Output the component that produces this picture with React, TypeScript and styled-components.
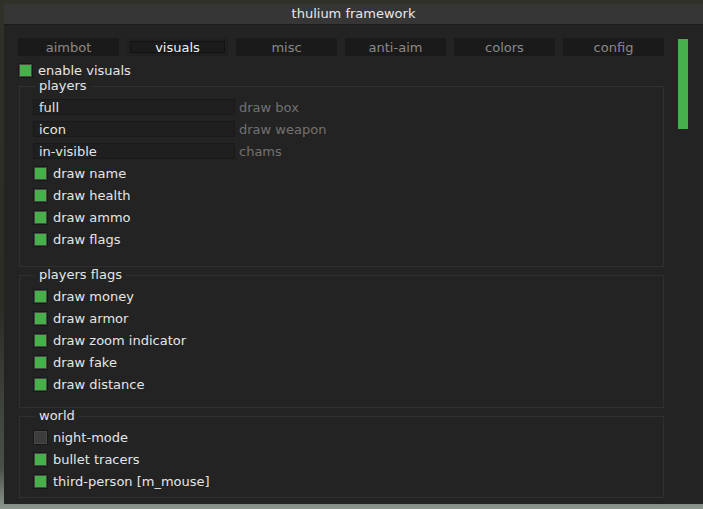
import React, { FC } from 'react';
import styled, { createGlobalStyle } from 'styled-components';

const GlobalStyle = createGlobalStyle`
  html, body {
    margin: 0;
    padding: 0;
    width: 703px;
    height: 509px;
    overflow: hidden;
    background: linear-gradient(180deg, #30322a 0%, #2b2d25 60%, #4a5048 92%, #8d978d 100%);
    font-family: 'DejaVu Sans', 'Liberation Sans', sans-serif;
  }
`;

const Window = styled.div`
  margin: 4px 0 0 4px;
  width: 699px;
  height: 500px;
  background: #232323;
  overflow: hidden;
  display: flex;
  flex-direction: column;
`;

const TitleBar = styled.div`
  height: 20px;
  flex: none;
  background: #363636;
  border-bottom: 1px solid #1c1c1c;
  color: #e8e8e8;
  font-size: 13px;
  line-height: 20px;
  text-align: center;
`;

const Body = styled.div`
  display: flex;
  gap: 14px;
  padding: 13px 0 0 14px;
`;

const Main = styled.div`
  width: 646px;
  display: flex;
  flex-direction: column;
`;

const Scrollbar = styled.div`
  width: 10px;
  height: 90px;
  margin-top: 1px;
  background: #47b04b;
`;

const Tabs = styled.div`
  display: grid;
  grid-template-columns: repeat(6, 101px);
  gap: 8px;
`;

const Tab = styled.div<{ $active?: boolean }>`
  height: 18px;
  box-sizing: border-box;
  padding: 3px;
  background: ${(p) => (p.$active ? '#1f1f1f' : '#1a1a1a')};
  display: flex;
`;

const TabLabel = styled.span<{ $active?: boolean }>`
  flex: 1;
  display: flex;
  align-items: center;
  justify-content: center;
  font-size: 13px;
  color: ${(p) => (p.$active ? '#f2f2f2' : '#8a8a8a')};
  border: 1px solid ${(p) => (p.$active ? '#121212' : 'transparent')};
  background: ${(p) => (p.$active ? '#1b1b1b' : 'transparent')};
`;

const Row = styled.div`
  height: 16px;
  display: flex;
  align-items: center;
  font-size: 13px;
  color: #e6e6e6;
`;

const TopRow = styled(Row)`
  margin-top: 6px;
`;

const Box = styled.span<{ $checked?: boolean }>`
  width: 15px;
  height: 15px;
  box-sizing: border-box;
  flex: none;
  border: 1px solid #181818;
  padding: 1px;
  background: #474747;
  display: flex;

  &::after {
    content: '';
    flex: 1;
    background: ${(p) => (p.$checked ? '#47b04b' : '#3c3c3c')};
  }
`;

const BoxText = styled.span`
  margin-left: 5px;
  white-space: nowrap;
`;

const Group = styled.fieldset<{ $bottom: number }>`
  margin: 1px 0 0 1px;
  width: 645px;
  box-sizing: border-box;
  min-width: 0;
  border: 1px solid #303030;
  padding: 6px 13px ${(p) => p.$bottom}px 13px;
  display: flex;
  flex-direction: column;
  gap: 6px;
`;

const Legend = styled.legend`
  margin-left: 2px;
  padding: 0 4px;
  font-size: 13px;
  line-height: 14px;
  color: #e6e6e6;
`;

const Combo = styled.div`
  width: 202px;
  height: 16px;
  box-sizing: border-box;
  flex: none;
  background: #1f1f1f;
  border: 1px solid #191919;
  padding-left: 5px;
  display: flex;
  align-items: center;
  color: #e6e6e6;
`;

const ComboLabel = styled.span`
  margin-left: 4px;
  color: #727272;
`;

type Item = { label: string; checked: boolean };

const Check: FC<Item> = ({ label, checked }) => (
  <Row>
    <Box $checked={checked} />
    <BoxText>{label}</BoxText>
  </Row>
);

const tabs = ['aimbot', 'visuals', 'misc', 'anti-aim', 'colors', 'config'];

const combos = [
  { value: 'full', label: 'draw box' },
  { value: 'icon', label: 'draw weapon' },
  { value: 'in-visible', label: 'chams' },
];

const players: Item[] = [
  { label: 'draw name', checked: true },
  { label: 'draw health', checked: true },
  { label: 'draw ammo', checked: true },
  { label: 'draw flags', checked: true },
];

const flags: Item[] = [
  { label: 'draw money', checked: true },
  { label: 'draw armor', checked: true },
  { label: 'draw zoom indicator', checked: true },
  { label: 'draw fake', checked: true },
  { label: 'draw distance', checked: true },
];

const world: Item[] = [
  { label: 'night-mode', checked: false },
  { label: 'bullet tracers', checked: true },
  { label: 'third-person [m_mouse]', checked: true },
];

const App: FC = () => (
  <>
    <GlobalStyle />
    <Window>
      <TitleBar>thulium framework</TitleBar>
      <Body>
        <Main>
          <Tabs>
            {tabs.map((t) => (
              <Tab key={t} $active={t === 'visuals'}>
                <TabLabel $active={t === 'visuals'}>{t}</TabLabel>
              </Tab>
            ))}
          </Tabs>
          <TopRow>
            <Box $checked />
            <BoxText>enable visuals</BoxText>
          </TopRow>
          <Group $bottom={19}>
            <Legend>players</Legend>
            {combos.map((c) => (
              <Row key={c.label}>
                <Combo>{c.value}</Combo>
                <ComboLabel>{c.label}</ComboLabel>
              </Row>
            ))}
            {players.map((i) => (
              <Check key={i.label} {...i} />
            ))}
          </Group>
          <Group $bottom={15}>
            <Legend>players flags</Legend>
            {flags.map((i) => (
              <Check key={i.label} {...i} />
            ))}
          </Group>
          <Group $bottom={8}>
            <Legend>world</Legend>
            {world.map((i) => (
              <Check key={i.label} {...i} />
            ))}
          </Group>
        </Main>
        <Scrollbar />
      </Body>
    </Window>
  </>
);

export default App;
